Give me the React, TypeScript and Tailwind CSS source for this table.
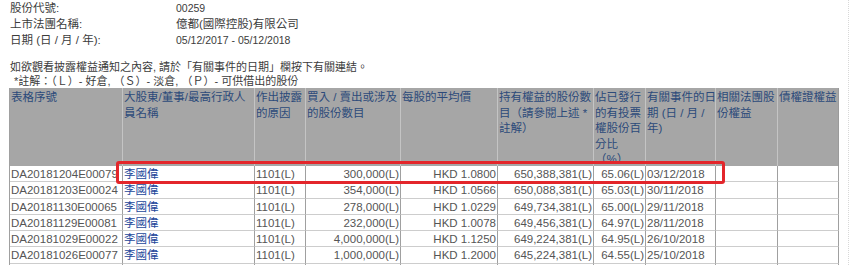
import React from "react";

const FONT = { fontFamily: '"Liberation Sans", "Noto Sans CJK TC", sans-serif' };

const GRID =
  "grid grid-cols-[113px_132px_51px_95px_97px_96px_52px_70px_62px_61px]";

const headers: React.ReactNode[] = [
  <>表格序號</>,
  <>
    大股東/董事/最高行政人
    <br />
    員名稱
  </>,
  <>
    作出披露
    <br />
    的原因
  </>,
  <>
    買入 / 賣出或涉及
    <br />
    的股份數目
  </>,
  <>每股的平均價</>,
  <>
    持有權益的股份數
    <br />
    目（請參閱上述 *
    <br />
    註解）
  </>,
  <>
    佔已發行
    <br />
    的有投票
    <br />
    權股份百
    <br />
    分比
    <br />
    （%）
  </>,
  <>
    有關事件的日
    <br />
    期 (日 / 月 /
    <br />
    年)
  </>,
  <>
    相關法團股
    <br />
    份權益
  </>,
  <>債權證權益</>,
];

const rows = [
  ["DA20181204E00079", "李國偉", "1101(L)", "300,000(L)", "HKD 1.0800", "650,388,381(L)", "65.06(L)", "03/12/2018"],
  ["DA20181203E00024", "李國偉", "1101(L)", "354,000(L)", "HKD 1.0566", "650,088,381(L)", "65.03(L)", "30/11/2018"],
  ["DA20181130E00065", "李國偉", "1101(L)", "278,000(L)", "HKD 1.0229", "649,734,381(L)", "65.00(L)", "29/11/2018"],
  ["DA20181129E00081", "李國偉", "1101(L)", "232,000(L)", "HKD 1.0078", "649,456,381(L)", "64.97(L)", "28/11/2018"],
  ["DA20181029E00022", "李國偉", "1101(L)", "4,000,000(L)", "HKD 1.1250", "649,224,381(L)", "64.95(L)", "26/10/2018"],
  ["DA20181026E00077", "李國偉", "1101(L)", "1,000,000(L)", "HKD 1.2000", "645,224,381(L)", "64.55(L)", "25/10/2018"],
  ["", "", "", "", "", "", "", ""],
];

const align = ["text-left", "text-left", "text-left", "text-right", "text-right", "text-right", "text-right", "text-left", "text-left", "text-left"];

export default function App() {
  return (
    <div
      className="relative w-[849px] h-[265px] overflow-hidden bg-white border-r border-dotted border-[#d8d8d8]"
      style={FONT}
    >
      {/* company info */}
      <div className="pl-[10px] text-[11.5px] leading-[16px] text-[#3c3c3c]">
        <div className="flex">
          <div className="w-[166px]">股份代號:</div>
          <div className="text-[10.5px]">00259</div>
        </div>
        <div className="flex">
          <div className="w-[166px]">上市法團名稱:</div>
          <div>億都(國際控股)有限公司</div>
        </div>
        <div className="flex">
          <div className="w-[166px]">日期 (日 / 月 / 年):</div>
          <div className="text-[10.5px]">05/12/2017 - 05/12/2018</div>
        </div>
      </div>

      <div className="mt-[12px] pl-[10px] text-[11px] leading-[14px] text-[#3c3c3c] whitespace-nowrap">
        <div>如欲觀看披露權益通知之內容, 請於「有關事件的日期」欄按下有關連結。</div>
        <div className="pl-[4px]">*註解：（Ｌ）- 好倉, （Ｓ）- 淡倉, （Ｐ）- 可供借出的股份</div>
      </div>

      {/* table */}
      <div className="ml-[9px] w-[830px] border-l border-[#a0a0a0] text-[11.5px]">
        <div className={GRID}>
          {headers.map((h, i) => (
            <div
              key={i}
              className="h-[78px] bg-[#a6a6a6] border-r border-[#c4c4c4] last:border-[#9a9a9a] pl-px pt-[2px] leading-[15.5px] text-[#2c4a7a] whitespace-nowrap overflow-visible"
            >
              {h}
            </div>
          ))}
        </div>
        {rows.map((r, ri) => (
          <div key={ri} className={GRID}>
            {[...r, "", ""].map((c, ci) => (
              <div
                key={ci}
                className={`h-[16.25px] leading-[16px] border-b border-b-[#cdcdcd] border-r border-r-[#a0a0a0] whitespace-nowrap overflow-hidden px-px ${align[ci]} ${
                  ci === 1 ? "text-[#23479a]" : "text-[#555555]"
                }`}
              >
                {c}
              </div>
            ))}
          </div>
        ))}
      </div>

      {/* red highlight annotation */}
      <div className="absolute left-[116px] top-[161px] w-[609px] h-[23px] border-[3px] border-[#e3262b] rounded-[3px] pointer-events-none" />
    </div>
  );
}
